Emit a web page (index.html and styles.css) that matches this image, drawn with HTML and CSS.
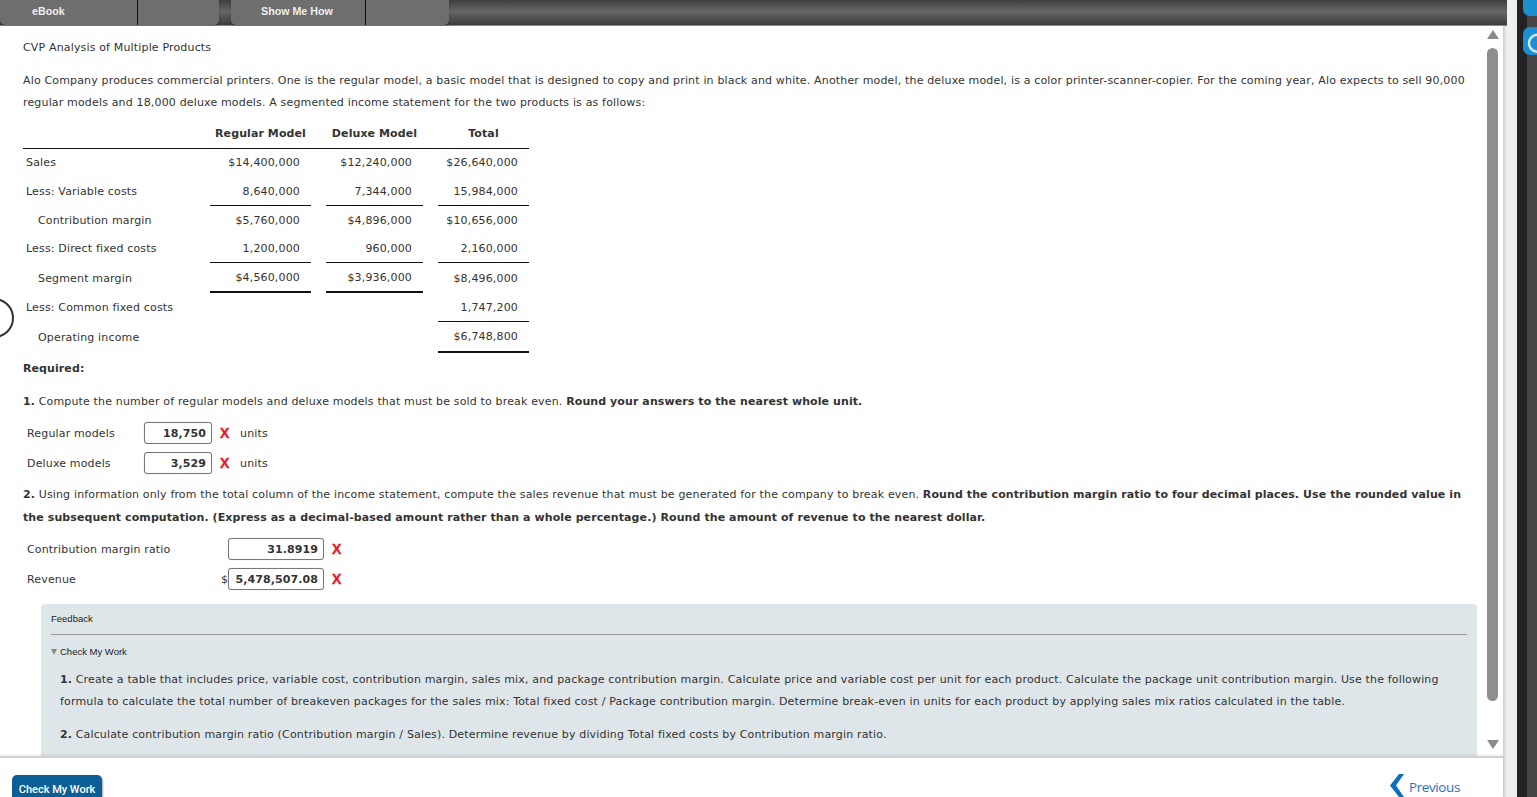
FILE: index.html
```html
<!DOCTYPE html>
<html lang="en">
<head>
<meta charset="utf-8">
<title>CVP Analysis of Multiple Products</title>
<link rel="stylesheet" href="styles.css">
</head>
<body>
<div class="app">
  <div class="main">
    <div class="topbar">
      <div class="tab tab-first"><span class="tab-label">eBook</span><span class="tab-end"></span></div>
      <div class="tab tab-second"><span class="tab-label">Show Me How</span><span class="tab-end"></span></div>
    </div>
    <div class="middle">
      <div class="content">
        <p class="title">CVP Analysis of Multiple Products</p>
        <p class="intro">Alo Company produces commercial printers. One is the regular model, a basic model that is designed to copy and print in black and white. Another model, the deluxe model, is a color printer-scanner-copier. For the coming year, Alo expects to sell 90,000 regular models and 18,000 deluxe models. A segmented income statement for the two products is as follows:</p>
        <table class="statement">
          <colgroup><col class="c-label"><col class="c-reg"><col class="c-gap"><col class="c-del"><col class="c-gap"><col class="c-tot"></colgroup>
          <thead>
            <tr><th></th><th>Regular Model</th><th></th><th>Deluxe Model</th><th></th><th>Total</th></tr>
          </thead>
          <tbody>
            <tr class="h28 first"><td>Sales</td><td class="n">$14,400,000</td><td></td><td class="n">$12,240,000</td><td></td><td class="n">$26,640,000</td></tr>
            <tr class="h29"><td>Less: Variable costs</td><td class="n u1">8,640,000</td><td></td><td class="n u1">7,344,000</td><td></td><td class="n u1">15,984,000</td></tr>
            <tr class="h28"><td class="ind">Contribution margin</td><td class="n">$5,760,000</td><td></td><td class="n">$4,896,000</td><td></td><td class="n">$10,656,000</td></tr>
            <tr class="h29"><td>Less: Direct fixed costs</td><td class="n u1">1,200,000</td><td></td><td class="n u1">960,000</td><td></td><td class="n u1">2,160,000</td></tr>
            <tr class="h30"><td class="ind">Segment margin</td><td class="n u2">$4,560,000</td><td></td><td class="n u2">$3,936,000</td><td></td><td class="n">$8,496,000</td></tr>
            <tr class="h29"><td>Less: Common fixed costs</td><td></td><td></td><td></td><td></td><td class="n u1">1,747,200</td></tr>
            <tr class="h31 last"><td class="ind">Operating income</td><td></td><td></td><td></td><td></td><td class="n u2">$6,748,800</td></tr>
          </tbody>
        </table>
        <p class="required"><b>Required:</b></p>
        <p class="q1"><b>1.</b> Compute the number of regular models and deluxe models that must be sold to break even. <b>Round your answers to the nearest whole unit.</b></p>
        <div class="answers a-units">
          <div class="a-row"><span class="a-label">Regular models</span><span class="input">18,750</span><span class="x">X</span><span class="unit">units</span></div>
          <div class="a-row"><span class="a-label">Deluxe models</span><span class="input">3,529</span><span class="x">X</span><span class="unit">units</span></div>
        </div>
        <p class="q2"><b>2.</b> Using information only from the total column of the income statement, compute the sales revenue that must be generated for the company to break even. <b>Round the contribution margin ratio to four decimal places. Use the rounded value in the subsequent computation. (Express as a decimal-based amount rather than a whole percentage.) Round the amount of revenue to the nearest dollar.</b></p>
        <div class="answers a-ratio">
          <div class="a-row"><span class="a-label wide">Contribution margin ratio</span><span class="input big">31.8919</span><span class="x">X</span></div>
          <div class="a-row"><span class="a-label wide rev">Revenue</span><span class="dollar">$</span><span class="input big">5,478,507.08</span><span class="x">X</span></div>
        </div>
        <section class="feedback">
          <div class="fb-head">Feedback</div>
          <div class="fb-toggle"><span class="tri"></span>Check My Work</div>
          <p class="fb-p"><b>1.</b> Create a table that includes price, variable cost, contribution margin, sales mix, and package contribution margin. Calculate price and variable cost per unit for each product. Calculate the package unit contribution margin. Use the following formula to calculate the total number of breakeven packages for the sales mix: Total fixed cost / Package contribution margin. Determine break-even in units for each product by applying sales mix ratios calculated in the table.</p>
          <p class="fb-p p2"><b>2.</b> Calculate contribution margin ratio (Contribution margin / Sales). Determine revenue by dividing Total fixed costs by Contribution margin ratio.</p>
        </section>
      </div>
      <div class="scrollbar">
        <svg class="arrow" width="12" height="9" viewBox="0 0 12 9"><path d="M6 0 L12 9 L0 9 Z"/></svg>
        <div class="thumb"></div>
        <svg class="arrow down" width="12" height="9" viewBox="0 0 12 9"><path d="M0 0 L12 0 L6 9 Z"/></svg>
      </div>
    </div>
    <div class="footer">
      <button class="check">Check My Work</button>
      <a class="prev"><svg width="14" height="23" viewBox="0 0 14 23"><path d="M9 0 L14 0 L6 11.5 L14 23 L9 23 L0 11.5 Z"/></svg><span>Previous</span></a>
    </div>
    <div class="ring"></div>
  </div>
  <div class="edge"></div>
  <div class="dock">
    <div class="dock-btn one"></div>
    <div class="dock-btn two"><svg width="22" height="22" viewBox="0 0 22 22"><path d="M15 4 A8.5 8.5 0 1 0 19 11" fill="none" stroke="#cfe6f3" stroke-width="2.4"/></svg></div>
  </div>
</div>
</body>
</html>
```

FILE: styles.css
```css
* { box-sizing: border-box; }
html, body { margin: 0; height: 100%; overflow: hidden; }
body { font-family: "DejaVu Sans", Verdana, sans-serif; font-size: 11px; letter-spacing: .16px; color: #333; background: #fff; }
b, th, .input { letter-spacing: .09px; }
.app { display: flex; width: 1537px; height: 797px; }
.main { position: relative; width: 1507px; height: 797px; display: flex; flex-direction: column; overflow: hidden; background: linear-gradient(90deg, #fff 1503px, #cdcdcd 1503px, #efefef 1507px); }
.edge { width: 10px; background: #f0f0f0; }
.dock { width: 20px; background: linear-gradient(90deg, #222 0 10px, #444 10px); position: relative; }
.dock-btn { position: absolute; left: 6px; width: 24px; background: #1c8fd0; border-radius: 7px; }
.dock-btn.one { top: -8px; height: 24px; }
.dock-btn.two { top: 27px; height: 28px; padding: 5px 0 0 4px; }
.topbar { height: 26px; flex: none; display: flex; background: linear-gradient(180deg, #3e3e3e 0, #666 45%, #3c3c3c 100%); border-bottom: 1px solid #888; font-family: "Liberation Sans", Arial, sans-serif; font-size: 10.7px; letter-spacing: 0; font-weight: bold; }
.tab { height: 25px; background: #6e6e6e; border-radius: 0 0 5px 5px; display: flex; box-shadow: 0 2px 3px rgba(0,0,0,.2); color: #eee; }
.tab-first { width: 219px; margin-right: 12px; }
.tab-second { width: 218px; }
.tab-label { border-right: 1px solid #111; line-height: 23px; }
.tab-first .tab-label { width: 138px; padding-left: 32px; }
.tab-second .tab-label { width: 135px; padding-left: 30px; }
.tab-end { flex: 1; }
.middle { width: 1503px; flex: 1; min-height: 0; display: flex; overflow: hidden; background: #fff; }
.content { width: 1486px; flex: none; padding: 0 9px 0 23px; overflow: hidden; }
.content p { margin: 0; }
.title { padding-top: 15px; line-height: 14px; }
.content .intro { margin-top: 15px; line-height: 22px; width: 1446px; }
.statement { border-collapse: collapse; table-layout: fixed; width: 506px; margin-top: 8px; }
.c-label { width: 187px; } .c-reg { width: 101px; } .c-gap { width: 15px; } .c-del { width: 97px; } .c-tot { width: 91px; }
.statement th { height: 26px; padding: 0 0 3px; border-bottom: 1px solid #111; font-weight: bold; text-align: center; color: #333; }
.statement td { padding: 2px 0 0 3px; white-space: nowrap; }
.h28 td { height: 28px; } .h29 td { height: 29px; } .h30 td { height: 30px; } .h31 td { height: 31px; }
.statement td.ind { padding-left: 15px; }
.statement td.n { text-align: right; padding: 2px 11px 0 0; }
.statement .first td, .statement .first td.n { padding-top: 0; }
.statement .last td.n { padding-top: 0; }
.statement td.u1 { border-bottom: 1px solid #111; }
.statement td.u2 { border-bottom: 2px solid #111; }
.content .required { margin-top: 8px; line-height: 16px; }
.content .q1 { margin-top: 17px; line-height: 16px; }
.answers { display: flex; flex-direction: column; gap: 8px; padding-left: 4px; }
.a-units { margin-top: 12px; }
.a-ratio { margin-top: 9px; }
.a-row { display: flex; align-items: center; height: 22px; }
.a-label { width: 117px; white-space: nowrap; }
.a-label.wide { width: 201px; }
.a-label.rev { width: 194px; }
.input { width: 68px; height: 22px; border: 1px solid #777; border-radius: 3px; text-align: right; padding-right: 5px; line-height: 21px; font-weight: bold; background: #fff; box-shadow: 0 0 1px rgba(0,0,0,.25); }
.input.big { width: 96px; }
.dollar { width: 7px; }
.x { color: #f0131e; font-family: "Liberation Sans", Arial, sans-serif; font-weight: bold; font-size: 14px; -webkit-text-stroke: .4px #f0131e; margin-left: 8px; width: 11px; }
.unit { margin-left: 9px; }
.content .q2 { margin-top: 9px; line-height: 23px; width: 1446px; }
.feedback { margin: 14px 0 0 18px; width: 1436px; background: #dfe6e9; border-radius: 4px 4px 0 0; padding: 0 10px; min-height: 200px; }
.fb-head { font-family: "Liberation Sans", Arial, sans-serif; font-size: 9.5px; letter-spacing: 0; height: 31px; line-height: 30px; border-bottom: 1px solid #999; color: #222; }
.fb-toggle { font-family: "Liberation Sans", Arial, sans-serif; font-size: 9.5px; letter-spacing: 0; color: #222; margin-top: 10px; line-height: 14px; display: flex; align-items: center; }
.tri { width: 0; height: 0; border-left: 3.5px solid transparent; border-right: 3.5px solid transparent; border-top: 6px solid #888; margin-right: 3px; }
.fb-p { padding-left: 9px; line-height: 22px; }
.content .feedback .fb-p { margin-top: 10px; }
.content .feedback .p2 { margin-top: 11px; }
.scrollbar { flex: 1; display: flex; flex-direction: column; align-items: flex-start; padding: 4px 0 0 1px; }
.scrollbar .arrow { fill: #8a8a8a; flex: none; }
.thumb { width: 11px; height: 653px; margin-top: 9px; flex: none; background: #8e8e8e; border-radius: 6px; }
.scrollbar .down { margin-top: 39px; }
.footer { width: 1503px; height: 41px; flex: none; position: relative; display: flex; justify-content: space-between; border-top: 2px solid #d0d0d0; box-shadow: 0 -1px 2px rgba(0,0,0,.1); background: #fff; padding: 17px 43px 0 12px; }
.check { width: 90px; height: 26px; border: 0; border-radius: 5px 5px 0 0; background: #0b5f96; color: #fff; font-family: Roboto, sans-serif; font-size: 11px; letter-spacing: 0; font-weight: 500; padding: 3px 0 0; box-shadow: 1px 1px 2px rgba(0,0,0,.35); }
.prev { display: flex; align-items: flex-start; color: #2a70c4; font-family: "Open Sans", sans-serif; font-size: 13.5px; letter-spacing: -.4px; margin-top: -1px; }
.prev svg { fill: #0c6fc0; margin-right: 5px; flex: none; }
.prev span { line-height: 22px; margin-top: 2px; }
.ring { position: absolute; left: -26px; top: 298px; width: 40px; height: 40px; border: 2px solid #333; border-radius: 50%; background: #fff; }
```
